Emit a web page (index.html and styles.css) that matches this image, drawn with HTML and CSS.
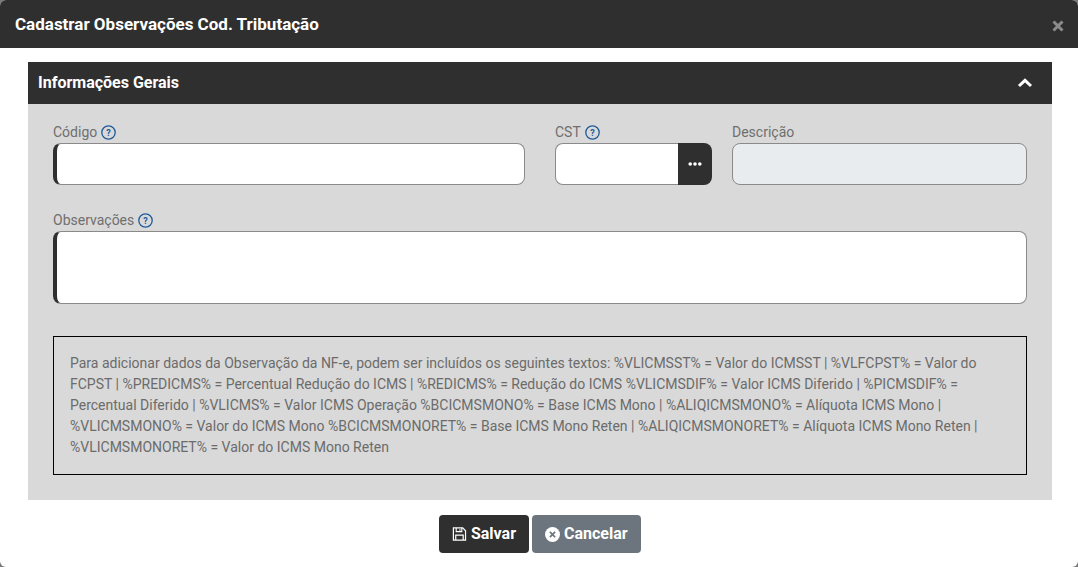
FILE: index.html
```
<!DOCTYPE html>
<html lang="pt-BR">
<head>
<meta charset="utf-8">
<title>Cadastrar Observações Cod. Tributação</title>
<link rel="stylesheet" href="styles.css">
</head>
<body>
<div class="modal">
  <header class="modal-header">
    <h1 class="modal-title">Cadastrar Observações Cod. Tributação</h1>
    <svg class="close-icon" viewBox="0 0 12 12" width="12" height="12" aria-label="Fechar"><path d="M1.5 1.5l9 9M10.5 1.5l-9 9" stroke="currentColor" stroke-width="3" fill="none"/></svg>
  </header>
  <section class="panel">
    <div class="panel-head">
      <h2 class="panel-title">Informações Gerais</h2>
      <svg class="chevron" viewBox="0 0 16 10" width="16" height="10"><path d="M2 8l6-5.6L14 8" stroke="currentColor" stroke-width="3" fill="none"/></svg>
    </div>
    <div class="panel-body">
      <div class="row-top">
        <div class="field">
          <label class="label">Código
            <svg class="help" viewBox="0 0 15 15" width="15" height="15"><circle cx="7.5" cy="7.5" r="6.7" fill="none" stroke="currentColor" stroke-width="1.3"/><text x="7.5" y="10.7" text-anchor="middle" class="help-mark">?</text></svg>
          </label>
          <input class="input required" type="text">
        </div>
        <div class="field">
          <label class="label">CST
            <svg class="help" viewBox="0 0 15 15" width="15" height="15"><circle cx="7.5" cy="7.5" r="6.7" fill="none" stroke="currentColor" stroke-width="1.3"/><text x="7.5" y="10.7" text-anchor="middle" class="help-mark">?</text></svg>
          </label>
          <div class="input-group">
            <input class="input group-input" type="text">
            <button class="dots" type="button"><svg viewBox="0 0 14 4" width="14" height="4"><circle cx="2.2" cy="2" r="1.8" fill="currentColor"/><circle cx="7" cy="2" r="1.8" fill="currentColor"/><circle cx="11.8" cy="2" r="1.8" fill="currentColor"/></svg></button>
          </div>
        </div>
        <div class="field field-desc">
          <label class="label">Descrição</label>
          <input class="input disabled" type="text" disabled>
        </div>
      </div>
      <div class="field obs">
        <label class="label">Observações
          <svg class="help" viewBox="0 0 15 15" width="15" height="15"><circle cx="7.5" cy="7.5" r="6.7" fill="none" stroke="currentColor" stroke-width="1.3"/><text x="7.5" y="10.7" text-anchor="middle" class="help-mark">?</text></svg>
        </label>
        <textarea class="input required textarea"></textarea>
      </div>
      <div class="info-box">Para adicionar dados da Observação da NF-e, podem ser incluídos os seguintes textos: %VLICMSST% = Valor do ICMSST | %VLFCPST% = Valor do FCPST | %PREDICMS% = Percentual Redução do ICMS | %REDICMS% = Redução do ICMS %VLICMSDIF% = Valor ICMS Diferido | %PICMSDIF% = Percentual Diferido | %VLICMS% = Valor ICMS Operação %BCICMSMONO% = Base ICMS Mono | %ALIQICMSMONO% = Alíquota ICMS Mono | %VLICMSMONO% = Valor do ICMS Mono %BCICMSMONORET% = Base ICMS Mono Reten | %ALIQICMSMONORET% = Alíquota ICMS Mono Reten | %VLICMSMONORET% = Valor do ICMS Mono Reten</div>
    </div>
  </section>
  <footer class="actions">
    <button class="btn btn-dark" type="button">
      <svg viewBox="0 0 16 16" width="16" height="16"><path d="M1.5 1.5h10l3 3v10h-13z" fill="none" stroke="currentColor" stroke-width="1.3"/><path d="M4.5 1.5v4h6v-4M8.5 2.8v1.6" fill="none" stroke="currentColor" stroke-width="1.2"/><path d="M4 14.5V9.2h8v5.3" fill="none" stroke="currentColor" stroke-width="1.3"/></svg>
      Salvar
    </button>
    <button class="btn btn-grey" type="button">
      <svg viewBox="0 0 16 16" width="15" height="15"><circle cx="8" cy="8" r="8" fill="currentColor"/><path d="M5.2 5.2l5.6 5.6M10.8 5.2l-5.6 5.6" stroke="#6c757d" stroke-width="1.7" fill="none"/></svg>
      Cancelar
    </button>
  </footer>
</div>
</body>
</html>
```
FILE: styles.css
```
* { box-sizing: border-box; }
html, body { margin: 0; height: 100%; }
body { background: #7a7a7a; font-family: Roboto, "Liberation Sans", sans-serif; overflow: hidden; }
.modal { width: 1078px; height: 567px; background: #fff; border-radius: 6px; overflow: hidden; display: flex; flex-direction: column; }
.modal-header { height: 48px; flex: none; background: #2f2f2f; color: #fff; display: flex; align-items: center; justify-content: space-between; padding: 0 14px 0 15px; }
.modal-title { margin: 0; font-size: 17px; line-height: 24px; font-weight: 700; }
.close-icon { color: #8c8c8c; margin-top: 4px; }
.panel { margin: 14px 26px 0 28px; background: #d9d9d9; }
.panel-head { height: 42px; background: #2f2f2f; color: #fff; display: flex; align-items: center; justify-content: space-between; padding: 0 19px 0 10px; }
.panel-title { margin: 0; font-size: 16px; line-height: 24px; font-weight: 700; }
.chevron { display: block; }
.panel-body { padding: 18px 25px 25px; }
.row-top { display: grid; grid-template-columns: 472px 157px 295px; column-gap: 30px; }
.field-desc { margin-left: -10px; width: 295px; }
.field { display: flex; flex-direction: column; min-width: 0; }
.label { display: flex; align-items: center; gap: 4px; height: 21px; font-size: 14px; line-height: 21px; color: #6f6f6f; }
.help { color: #1d5a9c; flex: none; }
.help-mark { font: 700 9px Roboto, sans-serif; fill: #1d5a9c; }
.input { display: block; width: 100%; height: 42px; margin: 0; background: #fff; border: 1px solid #8a8a8a; border-radius: 8px; outline: 0; padding: 0 10px; font: 14px Roboto, sans-serif; }
.required { border-left: 4px solid #2f2f2f; }
.disabled { background: #e9ecef; }
.input-group { display: flex; }
.group-input { flex: 1; min-width: 0; border-radius: 8px 0 0 8px; border-right: 0; }
.dots { width: 34px; height: 42px; flex: none; padding: 0; border: 0; border-radius: 0 8px 8px 0; background: #2f2f2f; color: #fff; display: flex; align-items: center; justify-content: center; }
.obs { margin-top: 25px; }
.textarea { height: 73px; resize: none; }
.info-box { margin-top: 32px; height: 139px; border: 1px solid #000; padding: 16px 16px 0; font-size: 14px; line-height: 21px; color: #6b6b6b; }
.actions { display: flex; justify-content: center; gap: 3px; margin-top: 15px; padding-left: 2px; }
.btn { height: 38px; border: 0; border-radius: 4px; color: #fff; display: flex; align-items: center; gap: 4px; font: 700 16px/24px Roboto, sans-serif; padding: 0 13px; }
.btn-dark { background: #2f2f2f; width: 90px; }
.btn-grey { background: #6c757d; width: 109px; }
```
